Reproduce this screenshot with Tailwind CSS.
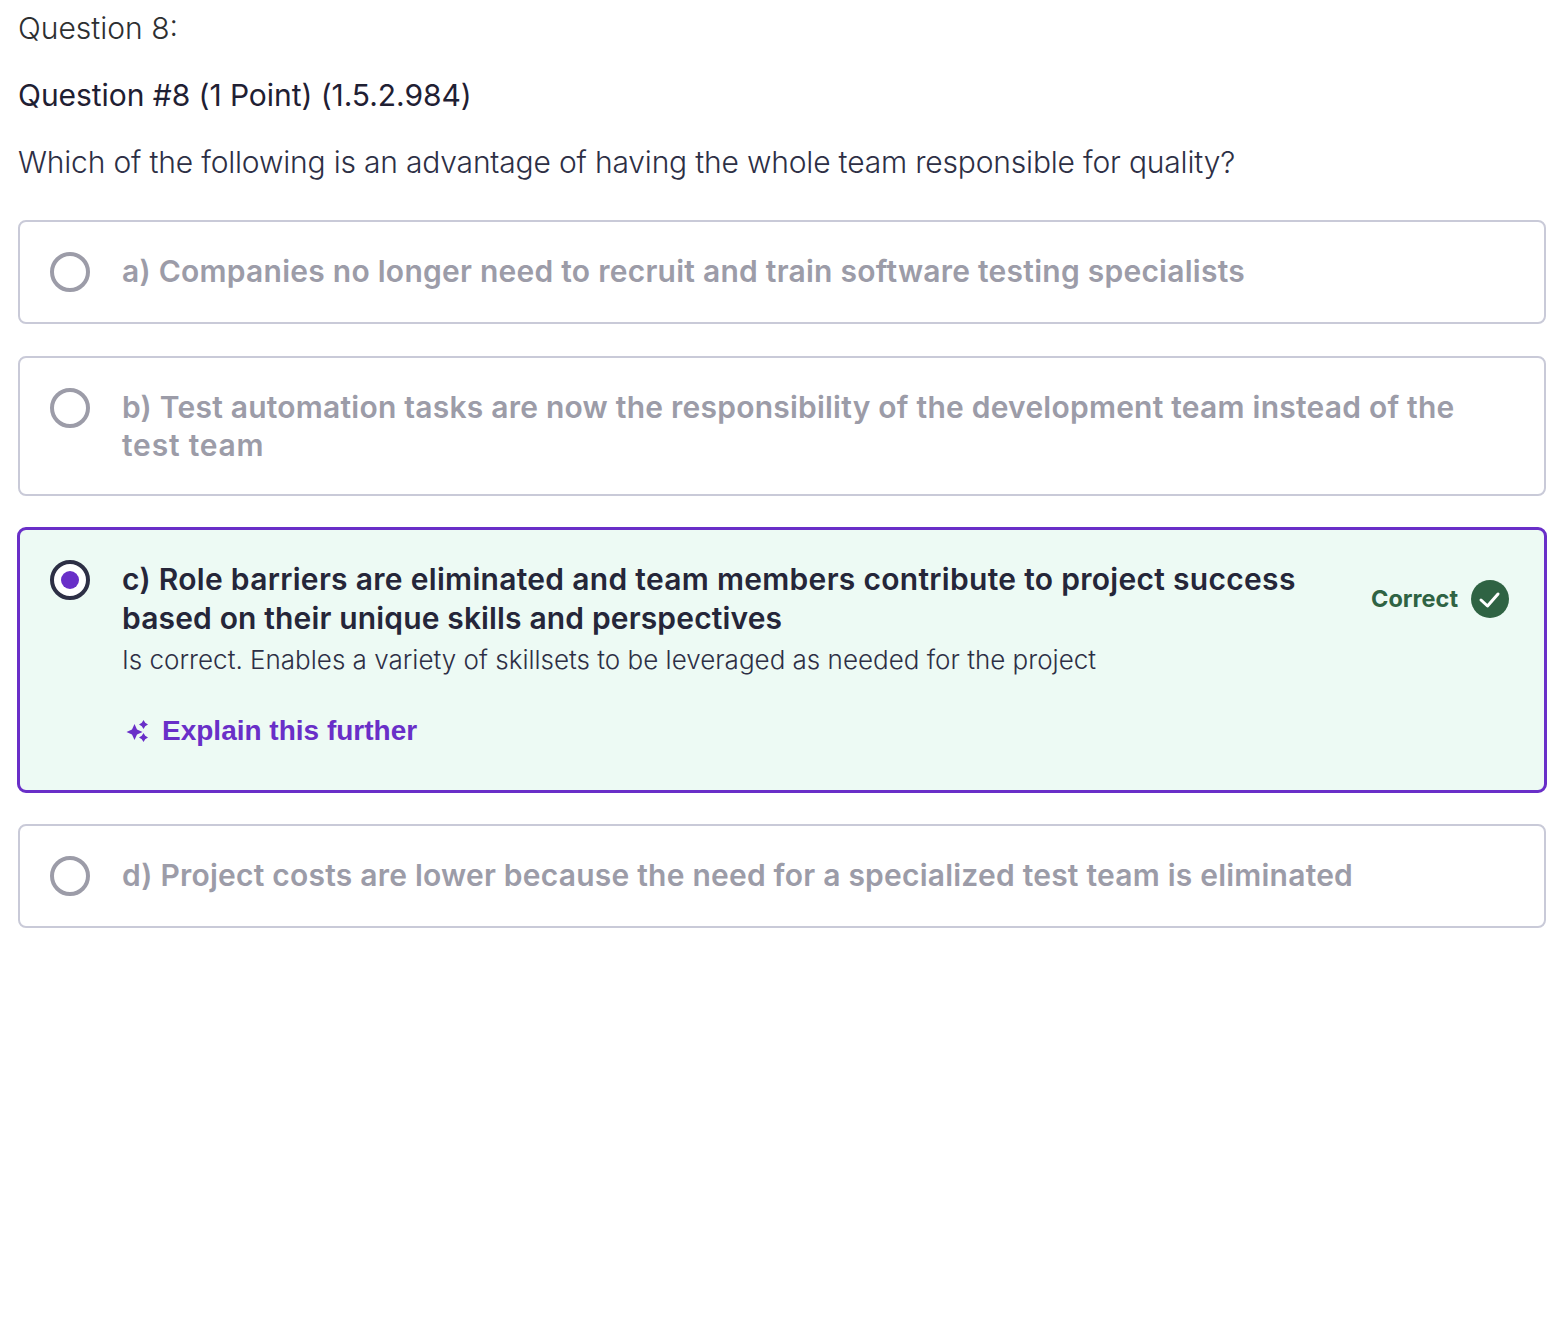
<!DOCTYPE html>
<html lang="en">
<head>
<meta charset="utf-8">
<script src="https://cdn.jsdelivr.net/npm/@tailwindcss/browser@4"></script>
<title>Question 8</title>
</head>
<body class="bg-white">
<main class="w-[1566px] h-[1336px] pl-[18px] pr-5 pt-[9px] font-['Inter',sans-serif] text-[#2d2f45] overflow-hidden">
  <p class="text-[30px] leading-[38px] font-light text-[#2d2f31]">Question 8:</p>
  <p class="mt-[29px] text-[30px] leading-[38px] font-normal tracking-[-0.06px] text-[#1f2033]">Question #8 (1 Point) (1.5.2.984)</p>
  <p class="mt-[29px] text-[30px] leading-[38px] font-light tracking-[-0.18px]">Which of the following is an advantage of having the whole team responsible for quality?</p>
  <div class="mt-[39px] flex flex-col gap-8">
    <div class="flex gap-8 rounded-lg border-2 border-[#c9cad8] p-[30px]">
      <span class="size-10 shrink-0 rounded-full border-4 border-[#9c9ca8]"></span>
      <p class="text-[30px] leading-[38px] font-semibold tracking-[0.25px] text-[#9c9ca8]">a) Companies no longer need to recruit and train software testing specialists</p>
    </div>
    <div class="flex gap-8 rounded-lg border-2 border-[#c9cad8] p-[30px]">
      <span class="size-10 shrink-0 rounded-full border-4 border-[#9c9ca8]"></span>
      <p class="pr-10 text-[30px] leading-[38px] font-semibold tracking-[0.23px] text-[#9c9ca8]">b) Test automation tasks are now the responsibility of the development team instead of the <span class="tracking-[0.8px]">test team</span></p>
    </div>
    <div class="-mx-px -my-px flex gap-8 rounded-[9px] border-[3px] border-[#692fc8] bg-[#edfaf4] pt-[30px] pr-[35px] pb-[40px] pl-[30px]">
      <span class="flex size-10 shrink-0 items-center justify-center rounded-full border-4 border-[#2d2f45] bg-white">
        <span class="size-[18px] rounded-full bg-[#692fc8]"></span>
      </span>
      <div class="min-w-0 flex-1">
        <p class="text-[30px] leading-[39px] font-semibold tracking-[0.3px] text-[#252639]">c) Role barriers are eliminated and team members contribute to project success <span class="tracking-[0.15px]">based on their unique skills and perspectives</span></p>
        <p class="mt-[3px] text-[26px] leading-[38px] font-light text-[#2d2f45]">Is correct. Enables a variety of skillsets to be leveraged as needed for the project</p>
        <div class="mt-[33px] flex items-center gap-[13px] pl-1 font-['Liberation_Sans',sans-serif] text-[28px] leading-[38px] font-bold text-[#692fc8]">
          <svg class="size-[23px] shrink-0" viewBox="0 0 23 23" fill="currentColor" aria-hidden="true"><path d="M8.5 4 11 9.5 16.5 12 11 14.5 8.5 20 6 14.5 .5 12 6 9.5Z"/><path d="M17.5 0 19.2 2.8 22 4.5 19.2 6.2 17.5 9 15.8 6.2 13 4.5 15.8 2.8Z"/><path d="M17.5 13 19.2 15.8 22 17.5 19.2 19.2 17.5 22 15.8 19.2 13 17.5 15.8 15.8Z"/></svg>
          <span>Explain this further</span>
        </div>
      </div>
      <div class="mt-5 flex h-[38px] shrink-0 items-center gap-[13px] pl-10 text-[23.5px] font-bold text-[#2f6343]">
        <span>Correct</span>
        <span class="flex size-[38px] items-center justify-center rounded-full bg-[#2f6343]">
          <svg class="size-[38px]" viewBox="0 0 38 38" fill="none" stroke="#fff" stroke-width="3" stroke-linecap="round" stroke-linejoin="round" aria-hidden="true"><path d="M10 20 16.5 26 27 14"/></svg>
        </span>
      </div>
    </div>
    <div class="flex gap-8 rounded-lg border-2 border-[#c9cad8] p-[30px]">
      <span class="size-10 shrink-0 rounded-full border-4 border-[#9c9ca8]"></span>
      <p class="text-[30px] leading-[38px] font-semibold tracking-[0.22px] text-[#9c9ca8]">d) Project costs are lower because the need for a specialized test team is eliminated</p>
    </div>
  </div>
</main>
</body>
</html>
